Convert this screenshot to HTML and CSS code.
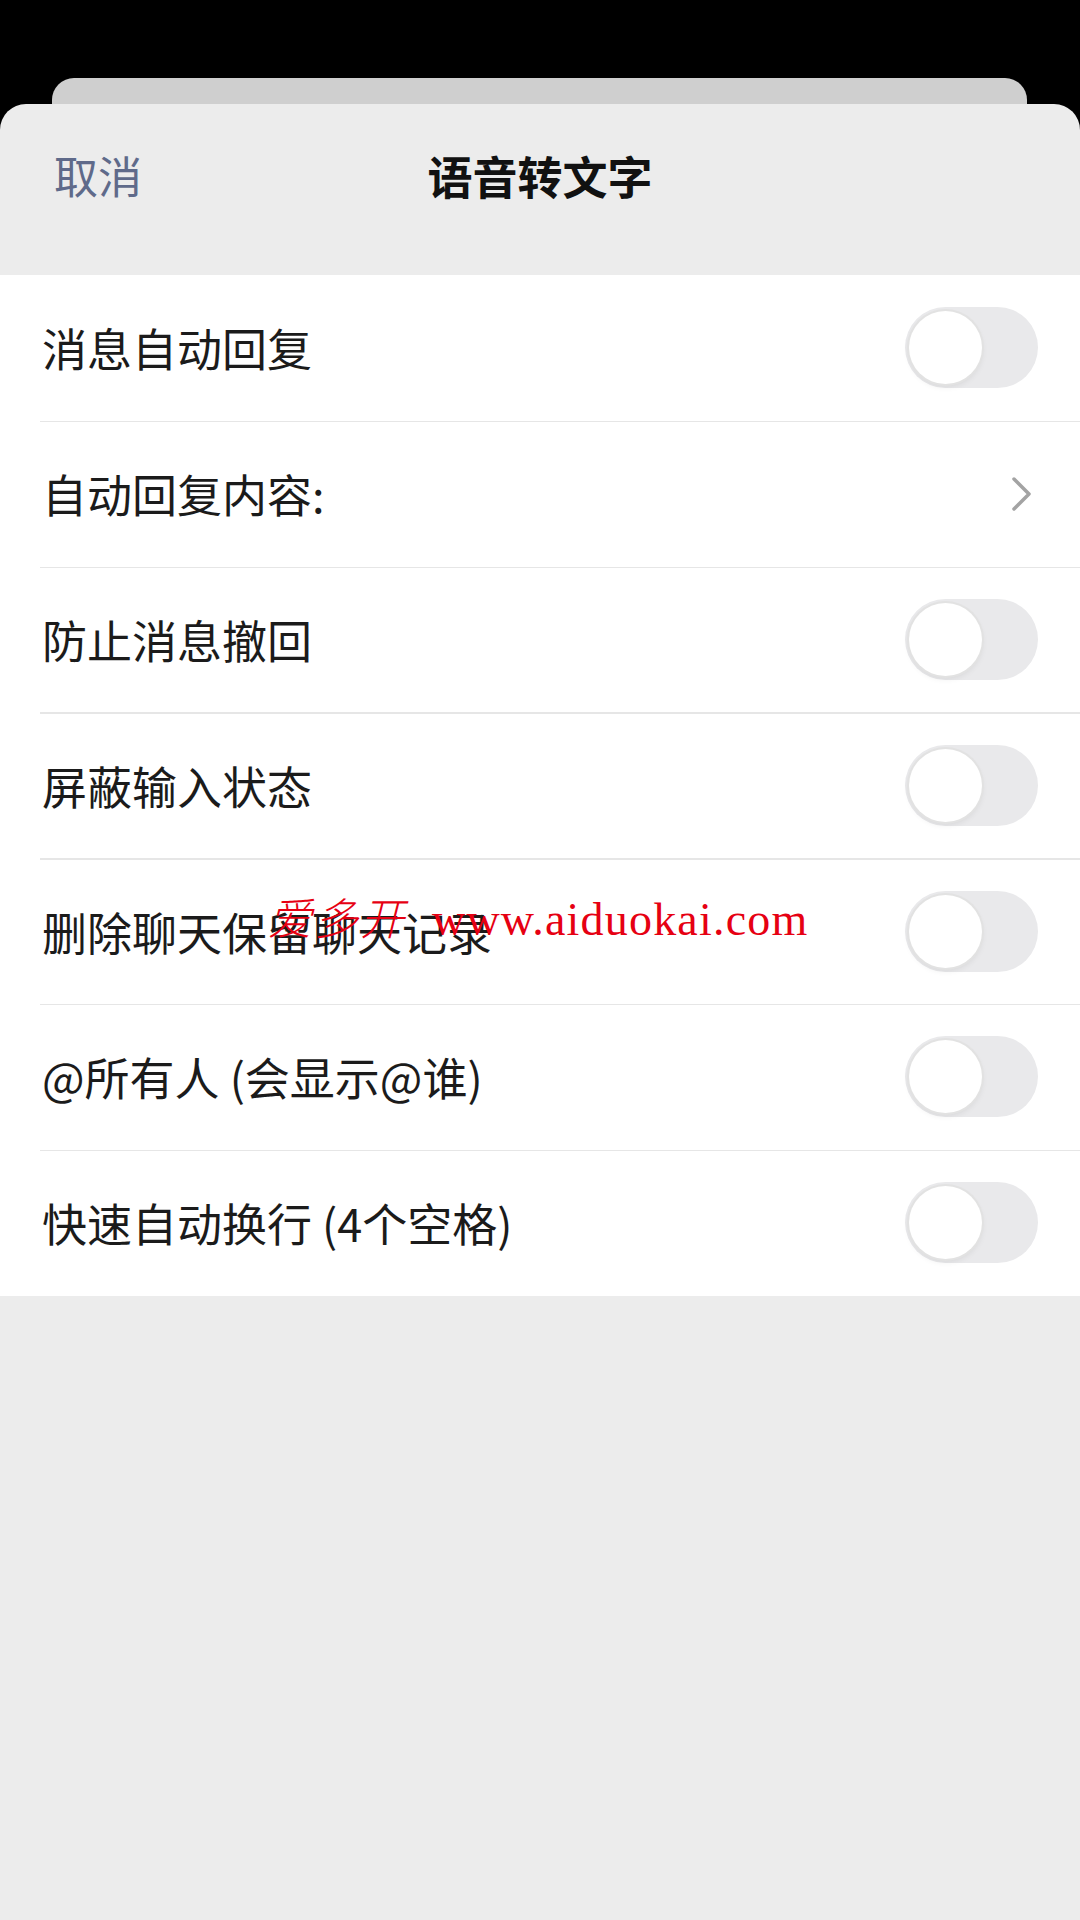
FILE: index.html
```html
<!DOCTYPE html>
<html lang="zh-CN">
<head>
  <meta charset="UTF-8" />
  <title>语音转文字</title>
  <link rel="stylesheet" href="styles.css">
</head>

<body>
  <div class="back-card"></div>

  <div class="sheet">
    <div class="sheet-header">
      <span class="cancel">取消</span>
      <h2 class="title">语音转文字</h2>
      <span></span>
    </div>

    <div class="list">
      <div class="row">
        <span class="label">消息自动回复</span>
        <div class="switch"><div class="knob"></div></div>
      </div>
      <div class="row">
        <span class="label">自动回复内容:</span>
        <svg class="chevron" width="22" height="36" viewBox="0 0 22 36">
          <polyline points="3,3 18,18 3,33" fill="none" stroke="#a3a3a3" stroke-width="3.5" stroke-linecap="round" stroke-linejoin="round" />
        </svg>
      </div>
      <div class="row">
        <span class="label">防止消息撤回</span>
        <div class="switch"><div class="knob"></div></div>
      </div>
      <div class="row">
        <span class="label">屏蔽输入状态</span>
        <div class="switch"><div class="knob"></div></div>
      </div>
      <div class="row">
        <span class="label">删除聊天保留聊天记录</span>
        <div class="switch"><div class="knob"></div></div>
        <div class="watermark"><span class="wm-cn">爱多开</span><span class="wm-url">www.aiduokai.com</span></div>
      </div>
      <div class="row">
        <span class="label">@所有人 (会显示@谁)</span>
        <div class="switch"><div class="knob"></div></div>
      </div>
      <div class="row">
        <span class="label">快速自动换行 (4个空格)</span>
        <div class="switch"><div class="knob"></div></div>
      </div>
    </div>
  </div>
</body>
</html>
```

FILE: styles.css
```css
html, body {
  margin: 0;
  padding: 0;
}
body {
  width: 1080px;
  height: 1920px;
  overflow: hidden;
  background: #000;
  font-family: "Noto Sans CJK SC", "Noto Sans", sans-serif;
  color: #1b1b1b;
}
.back-card {
  margin: 78px 53px 0 52px;
  height: 26px;
  background: #cfcfcf;
  border-radius: 22px 22px 0 0;
}
.sheet {
  height: 1816px;
  background: #ececec;
  border-radius: 26px 26px 0 0;
}
.sheet-header {
  display: grid;
  grid-template-columns: 1fr auto 1fr;
  align-items: center;
  height: 142px;
  padding: 0 54px;
}
.cancel {
  font-size: 44px;
  color: #5f6a8a;
}
.title {
  margin: 0;
  font-size: 45px;
  font-weight: 700;
  color: #111;
}
.list {
  margin-top: 29px;
  background: #fff;
}
.row {
  position: relative;
  display: flex;
  align-items: center;
  justify-content: space-between;
  height: 145.8px;
  box-sizing: border-box;
  padding: 0 42px 0 42px;
}
.row + .row::before {
  content: "";
  position: absolute;
  left: 40px;
  right: 0;
  top: 0;
  height: 1.5px;
  background: #e6e6e6;
}
.label {
  font-size: 45px;
  line-height: 1;
}
.chevron {
  margin-right: 5px;
}
.switch {
  display: flex;
  align-items: center;
  width: 133px;
  height: 81px;
  box-sizing: border-box;
  padding: 0 4px;
  border-radius: 41px;
  background: #e9e9eb;
}
.knob {
  width: 73px;
  height: 73px;
  border-radius: 50%;
  background: #fff;
  box-shadow: 0 0 0 2px #e2e2e2, 0 3px 6px rgba(0,0,0,0.08);
}
.watermark {
  position: absolute;
  left: 268px;
  top: 36px;
  display: flex;
  align-items: baseline;
  color: #e60012;
  line-height: 1;
  white-space: nowrap;
}
.wm-cn {
  font-size: 44px;
  font-weight: 300;
  font-style: italic;
  letter-spacing: 2px;
}
.wm-url {
  margin-left: 26px;
  font-family: "Liberation Serif", serif;
  font-size: 46px;
  letter-spacing: 1.2px;
}
```
